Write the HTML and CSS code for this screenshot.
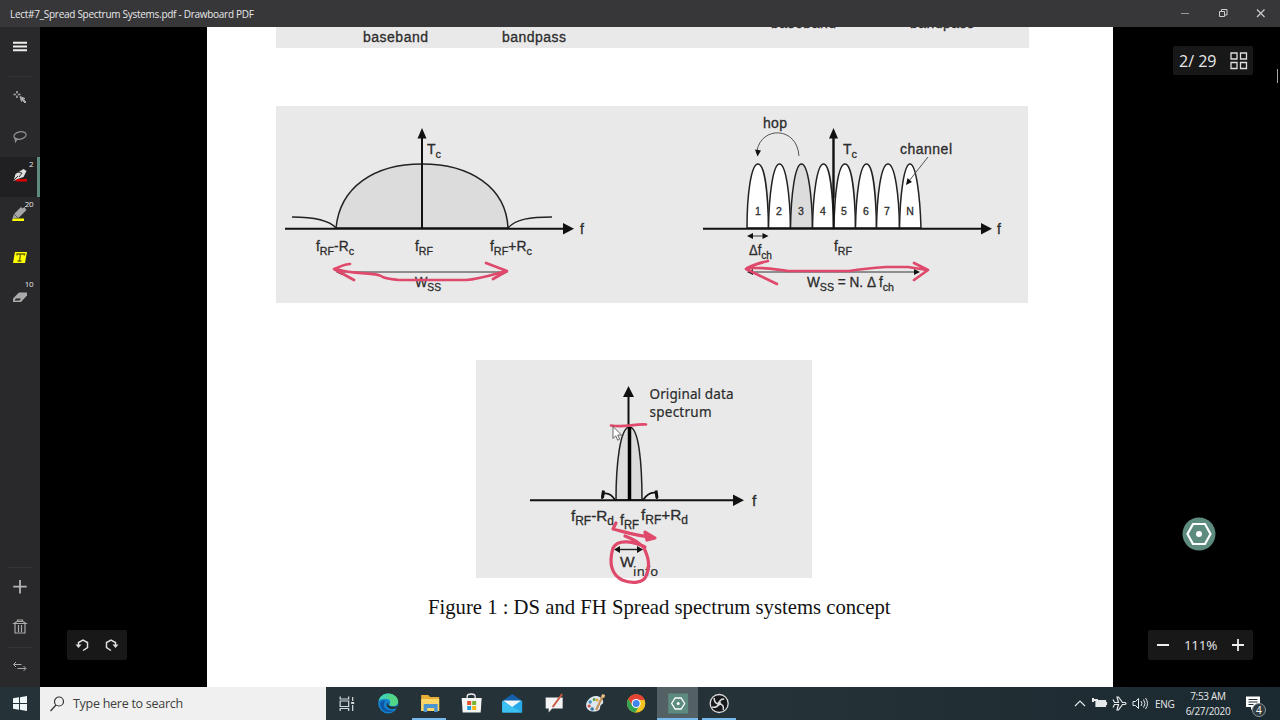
FILE: index.html
```html
<!DOCTYPE html>
<html lang="en">
<head>
    <meta charset="utf-8">
    <title>Lect#7_Spread Spectrum Systems.pdf - Drawboard PDF</title>
    <link rel="stylesheet" href="styles.css">
</head>
<body>
    <div class="titlebar">
        <span class="title">Lect#7_Spread Spectrum Systems.pdf - Drawboard PDF</span>
        <svg class="window-buttons" width="114" height="27" fill="none" stroke="#ccc">
            <path d="M15 13.500h8" stroke="#999"/>
            <path d="M53.500 11.500h5v5h-5zM55.500 11v-1.500h5.500v5.500h-2"/>
            <path d="M91 9.500l7.500 7.500M98.500 9.500L91 17" stroke-width="1.200"/>
        </svg>
    </div>

    <div class="workspace">
        <div class="sidebar">
            <div class="tools">
                <svg class="tool" viewBox="0 0 40 40"><path d="M13 15.700h14M13 19.500h14M13 23.300h14" stroke="#eee" stroke-width="2"/></svg>
                <div class="divider menu-divider"></div>
                <svg class="tool" viewBox="0 0 40 40" fill="none" stroke="#aaa">
                    <path d="M17 14v7M13.500 17.500h7" stroke-width="1.600"/>
                    <circle cx="17" cy="17.500" r="1.200" fill="#29292b" stroke="none"/>
                    <path d="M20 19.500l5 2-1.500 1 2.500 2.500-1 1-2.500-2.500-1 1z" fill="#aaa"/>
                </svg>
                <svg class="tool" viewBox="0 0 40 40" fill="none" stroke="#929292" stroke-width="1.200">
                    <ellipse cx="20" cy="18.500" rx="6.200" ry="3.700" transform="rotate(-10 20 18.500)"/>
                    <path d="M15 20.500l.5 4 2-3M14 21l3 1"/>
                </svg>
                <div class="tool active">
                    <svg viewBox="0 0 40 40">
                        <path d="M17 22h10v2.500H15z" fill="#d90000"/>
                        <path d="M13.500 24l2-7 8-5 3 2-3 6-6 2z" fill="#ddd"/>
                        <path d="M18 15l4 1-3 4M14 23l4-4" stroke="#333" fill="none"/>
                    </svg>
                    <span class="size">2</span>
                </div>
                <div class="tool">
                    <svg viewBox="0 0 40 40">
                        <path d="M13 21.500h11v2.500H12z" fill="#ff0"/>
                        <path d="M14 17l7-7 1.500 1.500 2-1.500 2 3-8 8h-4l-2.500 2z" fill="#a5a5a8"/>
                        <path d="M14 17l4 4" stroke="#555"/>
                    </svg>
                    <span class="size">20</span>
                </div>
                <svg class="tool" viewBox="0 0 40 40">
                    <path d="M15 15h12l-2 11H13z" fill="#ff0"/>
                    <path d="M17 18.500v-1.500h7.500l-.3 1.500M20.500 17l-1 7M17.500 24h4" stroke="#65650c" stroke-width="1.300" fill="none"/>
                </svg>
                <div class="tool">
                    <svg viewBox="0 0 40 40">
                        <path d="M19 15.500h8v3l-6 6.500h-8v-3.500z" fill="#aaa"/>
                        <path d="M14.500 23.500h5l1.500-2h-5z" fill="#29292b"/>
                    </svg>
                    <span class="size">10</span>
                </div>
            </div>
            <div class="tools">
                <div class="divider"></div>
                <svg class="tool" viewBox="0 0 40 40"><path d="M20 13v13.500M13.200 19.700h13.500" stroke="#b5b5b5" stroke-width="1.800"/></svg>
                <svg class="tool" viewBox="0 0 40 40" fill="none" stroke="#aaa" stroke-width="1.200">
                    <path d="M14 16.500l3-2h6l3 2zM17.500 14.500v-1.500h5v1.500M15 17v9h10v-9M18.500 18v7M21.500 18v7"/>
                </svg>
                <div class="divider"></div>
                <svg class="tool" viewBox="0 0 40 40" fill="none" stroke="#aaa">
                    <path d="M16 15l-2.500 2.500L16 20M14 17.500h7.500M23.500 19l2.500 2.500-2.500 2.500M17.500 21.500h8"/>
                </svg>
            </div>
        </div>

        <div class="viewer">
            <div class="page">
                <svg class="fig-top" viewBox="276 27 753 21">
                    <g class="sans" font-size="14">
                        <text x="363" y="42" textLength="65">baseband</text>
                        <text x="502" y="42" textLength="64">bandpass</text>
                        <text x="771" y="28" textLength="65">baseband</text>
                        <text x="910" y="28" textLength="64">bandpass</text>
                    </g>
                </svg>

                <svg class="fig-spread" viewBox="276 106 752 197">
                    <!-- direct sequence -->
                    <g class="curve">
                        <path d="M336 228C340 187 374 164 422 164S506 187 508 228z" fill="#dcdcdc"/>
                        <path d="M292 217C312 217 329 220 336 228" fill="none"/>
                        <path d="M508 228C516 219 530 217 552 217" fill="none"/>
                    </g>
                    <path class="axis" d="M285 228.700H564M422 229V138"/>
                    <path d="M563 223l11 5.700-11 5.700zM417.500 138.500L422 128l4.500 10.500z"/>
                    <path d="M339 272H505" stroke="#333"/>
                    <path d="M336 272l6-3v6zM508 272l-6-3v6z"/>
                    <g class="sans" font-size="14">
                        <text x="427" y="154">T<tspan class="sub">c</tspan></text>
                        <text x="580" y="234">f</text>
                        <text x="316" y="251" textLength="38" lengthAdjust="spacingAndGlyphs">f<tspan class="sub">RF</tspan>-R<tspan class="sub">c</tspan></text>
                        <text x="415" y="251" textLength="18" lengthAdjust="spacingAndGlyphs">f<tspan class="sub">RF</tspan></text>
                        <text x="490" y="251" textLength="42" lengthAdjust="spacingAndGlyphs">f<tspan class="sub">RF</tspan>+R<tspan class="sub">c</tspan></text>
                        <text x="415" y="287" textLength="26" lengthAdjust="spacingAndGlyphs">W<tspan class="sub">SS</tspan></text>
                    </g>
                    <path class="ink" d="M350 264C344 264 340 267 334 269L354 280M336 269C354 275 375 272 381 276C385 279 391 279 398 280H466C480 279 491 275 506 271M486 263L507 271L493 279"/>

                    <!-- frequency hopping -->
                    <g class="curve" fill="#fff">
                        <path d="M747 228C747 195 751 164 758 164S768 195 768.500 228z"/>
                        <path d="M768.500 228C769 195 773 164 779.500 164S790 195 790.500 228z"/>
                        <path d="M790.500 228C791 195 795 164 801.500 164S812 195 812.500 228z" fill="#dcdcdc"/>
                        <path d="M812.500 228C813 195 817 164 823.500 164S833 195 833.500 228z"/>
                        <path d="M834 228C834.500 195 838 164 845 164S855 195 855.500 228z"/>
                        <path d="M855.500 228C856 195 860 164 866.500 164S876 195 876.500 228z"/>
                        <path d="M876.500 228C877 195 881 164 888 164S899 195 899.500 228z"/>
                        <path d="M899.500 228C900 195 904 164 910 164S920 195 921 228z"/>
                    </g>
                    <path class="axis" d="M703 228.700H982"/>
                    <path d="M833.500 229V138" stroke="#111" stroke-width="1.500"/>
                    <path d="M833.500 198V138" stroke="#111" stroke-width="2.200"/>
                    <path d="M981 223l11 5.700-11 5.700zM829 138.500l4.500-10.500 4.500 10.500z"/>
                    <path d="M799 156C797 126 761 126 757 151M928 157L909 181" fill="none" stroke="#555"/>
                    <path d="M755 149.500l6 1-3.500 6zM906 185l1.500-7 4.500 4z"/>
                    <path d="M751 236H765M750 272H917" stroke="#333"/>
                    <path d="M747 236l6-3v6zM768.500 236l-6-3v6zM747 272l6-3v6zM920 272l-6-3v6z"/>
                    <g class="sans" font-size="14">
                        <text x="763" y="128" textLength="24">hop</text>
                        <text x="900" y="154" textLength="52">channel</text>
                        <text x="843" y="154" textLength="14">T<tspan class="sub">c</tspan></text>
                        <text x="997" y="234">f</text>
                        <text x="749" y="255" textLength="23" lengthAdjust="spacingAndGlyphs">Δf<tspan class="sub">ch</tspan></text>
                        <text x="834" y="251" textLength="18" lengthAdjust="spacingAndGlyphs">f<tspan class="sub">RF</tspan></text>
                        <text x="807" y="287" textLength="87" lengthAdjust="spacingAndGlyphs">W<tspan class="sub">SS</tspan> = N. Δ f<tspan class="sub">ch</tspan></text>
                    </g>
                    <g class="sans" font-size="10.500" text-anchor="middle">
                        <text x="758" y="215">1</text>
                        <text x="779" y="215">2</text>
                        <text x="801" y="215">3</text>
                        <text x="823" y="215">4</text>
                        <text x="844" y="215">5</text>
                        <text x="866" y="215">6</text>
                        <text x="887" y="215">7</text>
                        <text x="910" y="215">N</text>
                    </g>
                    <path class="ink" d="M768 261C760 263 751 265 746 269L777 284M747 268C768 267 776 270 788 271H849C862 269 872 268 886 267H908L927 270M914 263L928 270L914 280"/>
                </svg>

                <svg class="fig-data" viewBox="476 360 336 218">
                    <path class="curve" d="M616 500C616 465 620 427 629.500 427S642 465 642 500z" fill="#dcdcdc"/>
                    <path d="M602 499l1-8M602 494C608 492 612 495 615 500M643 500C648 493 652 492 656 493M657 499l-1-8" fill="none" stroke="#111" stroke-width="1.700"/>
                    <path d="M602.500 498l1-7.500M657 498l-1-7.500" stroke="#111" stroke-width="3"/>
                    <path class="axis" d="M530 500.300H734M628.500 427V396"/>
                    <path d="M629.500 500V427" stroke="#000" stroke-width="3.500"/>
                    <path d="M733 494.500l11 5.800-11 5.800zM623 397l5.500-11 5.500 11z"/>
                    <path d="M618 549.500H640" stroke="#222" stroke-width="1.400"/>
                    <path d="M614 549.500l6-3.500v7zM643 549.500l-6-3.500v7z"/>
                    <g class="calibri" font-size="13.500">
                        <text x="649.500" y="399" textLength="84">Original data</text>
                        <text x="649.500" y="417" textLength="62">spectrum</text>
                    </g>
                    <g class="sans" font-size="15.500">
                        <text x="752" y="506">f</text>
                        <text x="571" y="521" textLength="43" lengthAdjust="spacingAndGlyphs">f<tspan class="sub">RF</tspan>-R<tspan class="sub">d</tspan></text>
                        <text x="620" y="525" textLength="19" lengthAdjust="spacingAndGlyphs">f<tspan class="sub">RF</tspan></text>
                        <text x="641" y="520" textLength="47" lengthAdjust="spacingAndGlyphs">f<tspan class="sub">RF</tspan>+R<tspan class="sub">d</tspan></text>
                        <text x="620" y="567">W</text>
                    </g>
                    <text class="calibri" x="633" y="576" font-size="13" textLength="25">info</text>
                    <path class="ink" d="M611 425.500C625 428 632 424 646 424.500"/>
                    <path class="ink data-ink" d="M616 523L613 529C625 532 636 536 652 537M645 532L655 538L647 540zM625 536C633 539 640 543 644 548M645 547C635 542 618 538 613 548C609 562 611 574 622 580C632 584 644 583 646 576C651 565 648 556 643 546"/>
                    <path d="M613 426.500v12l2.700-2.700 2 4.400 2-1-2-4.200h3.800z" fill="#fff" stroke="#444" stroke-width=".8"/>
                </svg>

                <p class="caption">Figure 1 : DS and FH Spread spectrum systems concept</p>
            </div>

            <div class="panel page-count">
                <span>2/ 29</span>
                <svg width="18" height="18" fill="none" stroke="#ddd" stroke-width="1.300"><path d="M1 1h6v6H1zM10.500 1h6v6h-6zM1 10.500h6v6H1zM10.500 10.500h6v6h-6z"/></svg>
            </div>
            <div class="scrollbar"></div>
            <svg class="radial" viewBox="0 0 34 34">
                <circle cx="17" cy="17" r="16.500" fill="#5d8b7f"/>
                <path d="M11 7h12l5.500 10-5.500 10H11L5.500 17z" fill="none" stroke="#fff" stroke-width="2.200"/>
                <circle cx="17" cy="17" r="3" fill="#fff"/>
            </svg>
            <svg class="panel history" viewBox="0 0 60 30" fill="none" stroke="#ddd" stroke-width="1.500">
                <path d="M11.500 15.500v-3l4.500-2.500 4.500 2.500v5l-4.500 3"/>
                <path d="M8.500 14.500h6l-3 3.500z" fill="#ddd" stroke="none"/>
                <path d="M48.500 15.500v-3L44 10l-4.500 2.500v5l4.500 3"/>
                <path d="M51.500 14.500h-6l3 3.500z" fill="#ddd" stroke="none"/>
            </svg>
            <div class="panel zoom">
                <svg width="12" height="14"><path d="M0 7h12" stroke="#eee" stroke-width="2"/></svg>
                <span>111%</span>
                <svg width="12" height="14"><path d="M0 7h12M6 1v12" stroke="#eee" stroke-width="1.800"/></svg>
            </div>
        </div>
    </div>

    <div class="taskbar">
        <svg class="start" viewBox="0 0 40 33"><path d="M13 11.200l6-.9v5.700h-6zM20 10.200l7-1.200v7h-7zM13 17h6v5.700l-6-.9zM20 17h7v7l-7-1.200z" fill="#eef6f8"/></svg>
        <div class="search">
            <svg width="15" height="16" fill="none" stroke="#333" stroke-width="1.200"><circle cx="9" cy="5.500" r="4.500"/><path d="M6 9l-5.500 6"/></svg>
            <span>Type here to search</span>
        </div>
        <div class="apps">
            <svg class="app" viewBox="0 0 41 33" fill="none" stroke="#d5dcdd">
                <path d="M14 9.500v2.500h8.500V9.500M14 24v-2.500h8.500V24M14 14h8.500v5.500H14zM26.500 10v4M26.500 18v6" stroke-width="1.200"/>
                <path d="M25 16h3" stroke-width="2"/>
            </svg>
            <svg class="app" viewBox="0 0 41 33">
                <circle cx="21" cy="16.500" r="10" fill="#1482cf"/>
                <path d="M11.500 14C13 4 29 4 31 14c.5 5-6 6-9 4 2-3 1-6-3-6-3 0-6 0-7.500 2z" fill="#43d3b0"/>
                <path d="M22 7c6 0 9 4 9 8 0 4-5 5-8.500 3 2-4 1-6-3-7z" fill="#5bd76a" opacity=".6"/>
                <path d="M18 14c-4 6 2 11 9 9-5 5-14 1-14-6 0-2 2-4 5-3z" fill="#0c56a3"/>
                <path d="M21.500 15c-2 3 1 6 9.500 4l-1 2c-4 2-11 1-10.500-4z" fill="#253338"/>
            </svg>
            <div class="app running">
                <svg viewBox="0 0 41 33">
                    <path d="M12 8h7l2 2h9v14H12z" fill="#e9ae35"/>
                    <path d="M12 12h18v12H12z" fill="#fbd769"/>
                    <path d="M14.500 25v-8h14v8H25v-4h-7v4z" fill="#4a94cf"/>
                </svg>
            </div>
            <svg class="app" viewBox="0 0 41 33">
                <path d="M17 12V9.500q0-2.500 4-2.500t4 2.500V12" fill="none" stroke="#eee" stroke-width="1.300"/>
                <path d="M11.500 11h20l-1 14.500h-18z" fill="#f5f5f5"/>
                <path d="M17 14h4v4h-4z" fill="#e95025"/>
                <path d="M22 14h4v4h-4z" fill="#78b52a"/>
                <path d="M17 19h4v4h-4z" fill="#209fdd"/>
                <path d="M22 19h4v4h-4z" fill="#f5b716"/>
            </svg>
            <svg class="app" viewBox="0 0 41 33">
                <path d="M11 14l10-7 10 7v3H11z" fill="#1261aa"/>
                <path d="M11 14h20v11.500H11z" fill="#29a9e7"/>
                <path d="M11 14l20 11.500H11z" fill="#3dc1f0"/>
                <path d="M12 13.500h18l-9 6.500z" fill="#eef7fb"/>
            </svg>
            <svg class="app" viewBox="0 0 41 33">
                <path d="M12.500 10.500h17v11H19l-3.500 4v-4h-3z" fill="#f4f4f4"/>
                <path d="M29 7l-8 11-1.500 2" fill="none" stroke="#c75b43" stroke-width="2"/>
            </svg>
            <svg class="app" viewBox="0 0 41 33">
                <path d="M14 13C19 6 29 9 29 15c0 3-3 2-3 5 0 5-6 5-10 4-5-2-5-8-2-11z" fill="#dce8ee"/>
                <circle cx="16" cy="15" r="1.700" fill="#418fc8"/>
                <circle cx="20" cy="12.500" r="1.500" fill="#5a9e46"/>
                <circle cx="15" cy="19" r="1.600" fill="#d15043"/>
                <circle cx="18" cy="22" r="1.800" fill="#3876a7"/>
                <circle cx="23" cy="13" r="1.500" fill="#e4aa31"/>
                <path d="M29 8l-7 15" stroke="#c88d51" stroke-width="2"/>
                <path d="M27 10l1-3 3 1-1 3z" fill="#e7c087"/>
            </svg>
            <svg class="app" viewBox="0 0 41 33">
                <circle cx="21" cy="16.500" r="9.200" fill="#f5c522"/>
                <path d="M13 12a9.200 9.200 0 0 1 16.500 1H21l-3.500 5.500z" fill="#e44335"/>
                <path d="M13 12a9.200 9.200 0 0 0 7 13.600l4-6.600-6.500 0z" fill="#34a353"/>
                <circle cx="21" cy="16.500" r="4.500" fill="#fff"/>
                <circle cx="21" cy="16.500" r="3.500" fill="#4285ea"/>
            </svg>
            <div class="app running current">
                <svg viewBox="0 0 41 33">
                    <path d="M11 6.500h20v20H11z" fill="#5d8b80"/>
                    <path d="M18 11l6 0 3.500 5.500-3.500 5.500h-6l-3.500-5.500z" fill="none" stroke="#fff" stroke-width="1.300"/>
                    <circle cx="21" cy="16.500" r="1.500" fill="#fff"/>
                </svg>
            </div>
            <div class="app running">
                <svg viewBox="0 0 41 33" fill="none" stroke="#ddd">
                    <circle cx="21" cy="16.500" r="9" fill="#171a1c" stroke-width="1.300"/>
                    <path d="M16 11c0 4 2 6 5 6 0-3 1-5 5-5M21 17c3 0 5 2 4 6M21 17c-2 3-4 4-7 3" stroke-width="1.500"/>
                    <circle cx="21" cy="16.500" r="1.500" fill="#ddd"/>
                </svg>
            </div>
        </div>
        <div class="tray">
            <svg width="79" height="33" fill="none" stroke="#e5e9ea" stroke-width="1.200">
                <path d="M4 19l5-5 5 5"/>
                <path d="M25 13.500h9.500v6H25zM35.500 15v3" fill="#e5e9ea"/>
                <path d="M22 13h5M22 11v4" stroke-width="2"/>
                <path d="M42 12.500l1.500 3h4L46 10h1.500l4 5.500H54q2 .8 0 2h-2.500l-4 5.500H46l1.500-5.500h-4L42 20.500"/>
                <path d="M62 14.500h2.500l3-3v10l-3-3H62zM70 14q2 2.500 0 5M72.500 12.500q3 4 0 8M74.500 11q4 5.500 0 11" stroke-width="1"/>
            </svg>
            <span class="lang">ENG</span>
            <div class="clock">
                <div>7:53 AM</div>
                <div>6/27/2020</div>
            </div>
            <svg class="notes" width="24" height="33">
                <path d="M1 9.500h14v10.500H9l-3 3v-3H1z" fill="#fff"/>
                <path d="M3.500 12.500h9M3.500 15h9M3.500 17.500h5" stroke="#1c2a31"/>
                <circle cx="14" cy="23" r="6.500" fill="#303b40" stroke="#8b9599"/>
                <text x="11" y="27" class="badge">4</text>
            </svg>
        </div>
    </div>
</body>
</html>
```
FILE: styles.css
```css
* {
    box-sizing: border-box;
}
body {
    margin: 0;
    width: 1280px;
    height: 720px;
    overflow: hidden;
    display: flex;
    flex-direction: column;
    background: #000;
    color: #e8e8e8;
    font-family: "Open Sans", "Noto Sans", sans-serif;
}
svg {
    display: block;
    flex: none;
}
.titlebar {
    height: 27px;
    flex: none;
    display: flex;
    align-items: center;
    justify-content: space-between;
    padding-left: 10px;
    background: #37373a;
}
.title {
    font-size: 10px;
    letter-spacing: -0.28px;
}
.workspace {
    height: 660px;
    display: flex;
}
.sidebar {
    width: 40px;
    display: flex;
    flex-direction: column;
    justify-content: space-between;
    background: #29292b;
}
.tool {
    position: relative;
    display: block;
    width: 40px;
    height: 40px;
}
.tool.active {
    background: #202022;
    border-right: 3px solid #5d8b80;
}
.tool svg {
    width: 40px;
    height: 40px;
}
.size {
    position: absolute;
    right: 7px;
    top: 1px;
    font-size: 8px;
    line-height: 12px;
    letter-spacing: -0.5px;
}
.tool.active .size {
    right: 4px;
}
.divider {
    height: 1px;
    margin: 0 8px -1px;
    background: #353537;
}
.menu-divider {
    margin: 9px 8px 0;
}
.viewer {
    flex: 1;
    position: relative;
    padding-left: 167px;
}
.page {
    width: 906px;
    height: 660px;
    background: #fff;
    overflow: hidden;
}
.fig-top {
    width: 753px;
    height: 21px;
    margin-left: 69px;
    background: #e9e9e9;
}
.fig-spread {
    width: 752px;
    height: 197px;
    margin: 58px 0 57px 69px;
    background: #e9e9e9;
}
.fig-data {
    width: 336px;
    height: 218px;
    margin-left: 269px;
    background: #e9e9e9;
    overflow: visible;
}
.page svg {
    fill: #111;
}
.sans {
    font-family: "Liberation Sans", Arial, sans-serif;
    fill: #2c2c2c;
    stroke: #2c2c2c;
    stroke-width: 0.3px;
}
.calibri {
    font-family: "Noto Sans", sans-serif;
    fill: #2c2c2c;
    stroke: #2c2c2c;
    stroke-width: 0.2px;
}
.sub {
    font-size: 0.78em;
    baseline-shift: -4px;
}
.curve {
    stroke: #222;
    stroke-width: 1.5px;
}
.axis {
    fill: none;
    stroke: #111;
    stroke-width: 2px;
}
.ink {
    fill: none;
    stroke: #df496b;
    stroke-width: 2.7px;
    stroke-linecap: round;
    stroke-linejoin: round;
}
.data-ink {
    stroke-width: 3.2px;
}
.caption {
    margin: 17px 0 0 221px;
    font: 20.7px/24px "Liberation Serif", "Times New Roman", serif;
    color: #111;
    white-space: nowrap;
}
.panel {
    position: absolute;
    display: flex;
    align-items: center;
    justify-content: space-between;
    background: #181818;
    border-radius: 2px;
}
.page-count {
    left: 1133px;
    top: 19px;
    width: 80px;
    height: 29px;
    padding: 0 5px 0 6px;
    font-size: 16px;
}
.history {
    left: 27px;
    top: 603px;
    width: 60px;
    height: 30px;
}
.zoom {
    left: 1108px;
    top: 603px;
    width: 105px;
    height: 30px;
    padding: 0 9px;
    font-size: 13.5px;
    letter-spacing: -0.3px;
}
.radial {
    position: absolute;
    left: 1142px;
    top: 490px;
    width: 34px;
    height: 34px;
}
.scrollbar {
    position: absolute;
    right: 2px;
    top: 42px;
    width: 1px;
    height: 14px;
    background: #aaa;
}
.taskbar {
    height: 33px;
    display: flex;
    background: linear-gradient(90deg, #253338 60%, #1b2930);
}
.start {
    width: 40px;
    height: 33px;
}
.search {
    width: 286px;
    display: flex;
    align-items: center;
    gap: 8px;
    padding-left: 10px;
    background: #f0f0f0;
    color: #3d3d3d;
    font-size: 12.5px;
    letter-spacing: -0.27px;
}
.apps {
    display: flex;
}
.app {
    width: 41.35px;
    height: 33px;
}
.app svg {
    width: 41.35px;
    height: 33px;
}
.running {
    background: linear-gradient(#76b9ed, #76b9ed) center bottom / 34px 2px no-repeat;
}
.running.current {
    background: linear-gradient(#76b9ed, #76b9ed) center bottom / 41px 2px no-repeat #536064;
}
.tray {
    margin-left: auto;
    display: flex;
    align-items: center;
    font-size: 10.5px;
}
.lang {
    width: 20px;
    margin-left: 5px;
    letter-spacing: -0.3px;
    font-size: 10px;
}
.clock {
    width: 48px;
    margin: 0 13px 0 9px;
    text-align: center;
    line-height: 15px;
    font-size: 10px;
    letter-spacing: -0.3px;
    white-space: nowrap;
}
.notes {
    margin-right: 11px;
}
.badge {
    fill: #fff;
    font-size: 10px;
}
```
